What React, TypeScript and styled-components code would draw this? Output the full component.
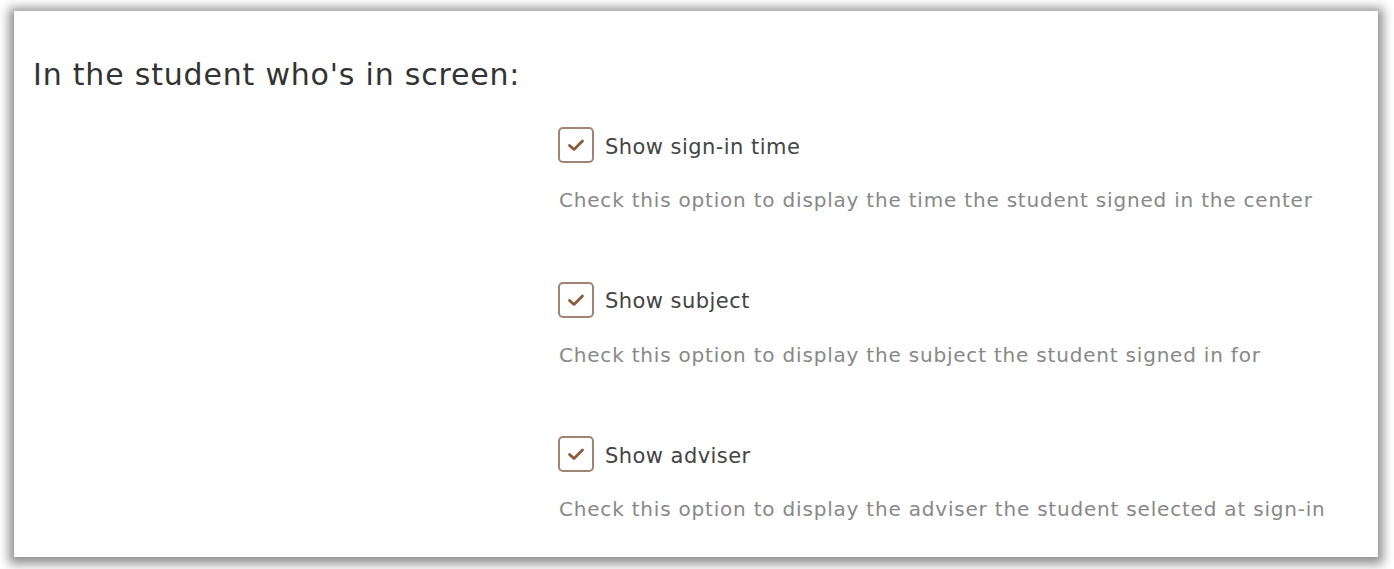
import React from "react";
import styled, { createGlobalStyle } from "styled-components";

const Global = createGlobalStyle`
  html, body { margin: 0; padding: 0; background: #ffffff; }
  body { font-family: "DejaVu Sans", Verdana, sans-serif; }
`;

const Page = styled.div`
  width: 1394px;
  height: 569px;
  box-sizing: border-box;
  padding: 11px 16px 12px 14px;
  background: #ffffff;
`;

const Panel = styled.div`
  height: 100%;
  background: #ffffff;
  box-shadow: 0 2px 10px 5px rgba(0, 0, 0, 0.44);
  box-sizing: border-box;
  padding: 46px 20px 0 19px;
`;

const Title = styled.h1`
  margin: 0;
  font-size: 30px;
  letter-spacing: 0.8px;
  font-weight: normal;
  color: #333333;
  line-height: 36px;
`;

const Options = styled.div`
  margin-left: 525px;
  margin-top: 34px;
  display: flex;
  flex-direction: column;
  gap: 69.5px;
`;

const Option = styled.div`
  display: flex;
  flex-direction: column;
  gap: 25px;
`;

const CheckRow = styled.label`
  display: flex;
  align-items: center;
  gap: 11px;
`;

const Box = styled.span`
  width: 36px;
  height: 36px;
  box-sizing: border-box;
  border: 2px solid #a08474;
  border-radius: 5px;
  display: flex;
  align-items: center;
  justify-content: center;
`;

const Label = styled.span`
  font-size: 21px;
  letter-spacing: 0.45px;
  color: #444444;
  padding-top: 3px;
`;

const Desc = styled.div`
  font-size: 20px;
  letter-spacing: 0.8px;
  line-height: 24px;
  color: #888888;
  padding-left: 1px;
`;

const Check = () => (
  <svg width="18" height="14" viewBox="0 0 18 14">
    <path d="M2.5 7.5 L7 11.5 L15.5 3" fill="none" stroke="#8a5a3c" strokeWidth="2.8" strokeLinecap="round" strokeLinejoin="round" />
  </svg>
);

const items = [
  { label: "Show sign-in time", desc: "Check this option to display the time the student signed in the center" },
  { label: "Show subject", desc: "Check this option to display the subject the student signed in for" },
  { label: "Show adviser", desc: "Check this option to display the adviser the student selected at sign-in" },
];

export default function App() {
  return (
    <>
      <Global />
      <Page>
        <Panel>
          <Title>In the student who's in screen:</Title>
          <Options>
            {items.map((it) => (
              <Option key={it.label}>
                <CheckRow>
                  <Box><Check /></Box>
                  <Label>{it.label}</Label>
                </CheckRow>
                <Desc>{it.desc}</Desc>
              </Option>
            ))}
          </Options>
        </Panel>
      </Page>
    </>
  );
}
